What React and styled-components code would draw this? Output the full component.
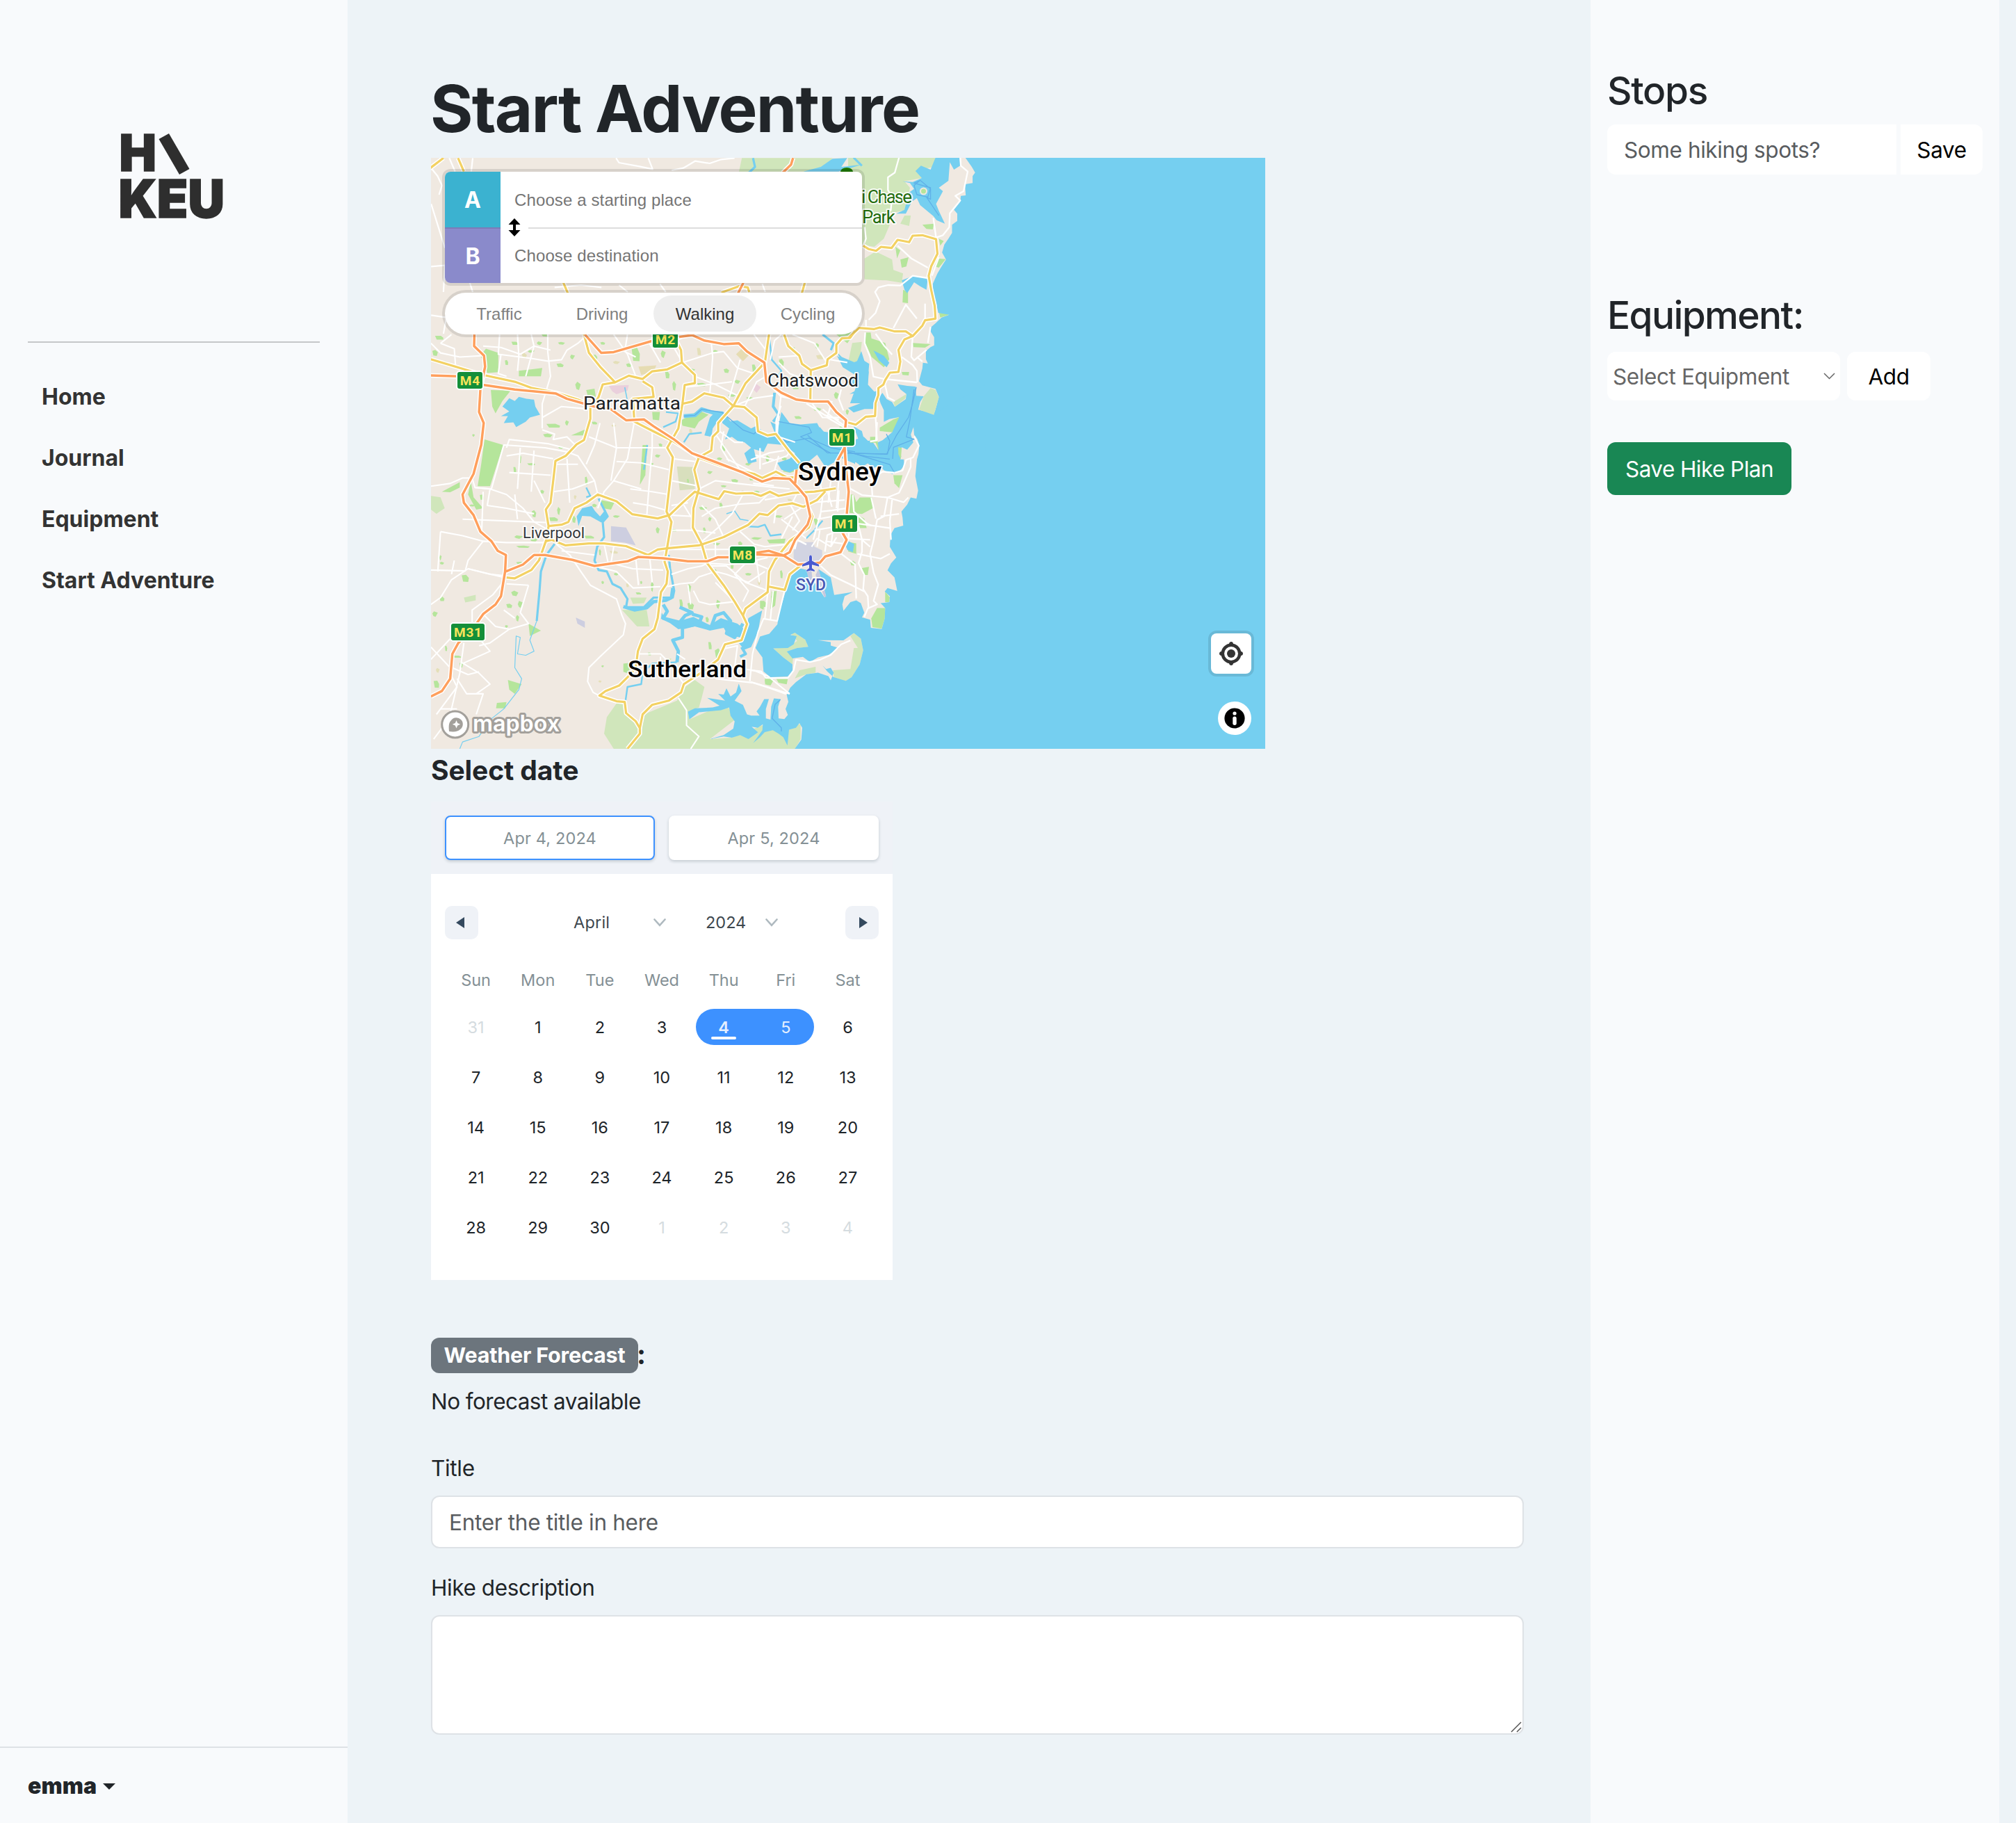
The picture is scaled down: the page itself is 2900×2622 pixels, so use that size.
import React from "react";
import styled, { createGlobalStyle } from "styled-components";

const GlobalStyle = createGlobalStyle`
  *, *::before, *::after { box-sizing: border-box; }
  body { margin: 0; background: #edf3f7; color: #212529; }
  body, input, select, textarea, button { font-family: Inter, "Liberation Sans", sans-serif; }
  h1, h2, h3, p { margin: 0; }
`;

/* ---------- page frame ---------- */
const Page = styled.div`
  display: grid;
  grid-template-columns: 500px 1788px 588px;
  width: 2900px;
  height: 2622px;
  overflow: hidden;
`;

const Sidebar = styled.aside`
  display: flex;
  flex-direction: column;
  background: #f8fafc;
`;
const LogoLink = styled.div`
  height: 491px;
  padding: 160px 0 0 160px;
`;
const Rule = styled.div`
  height: 2px;
  margin: 0 40px 34px;
  background: #c5c7c9;
`;
const Nav = styled.nav`
  display: flex;
  flex-direction: column;
  flex: 1;
`;
const NavItem = styled.a`
  height: 88px;
  line-height: 88px;
  padding-left: 60px;
  font-size: 32px;
  font-weight: 700;
  color: #333;
`;
const Account = styled.div`
  display: flex;
  align-items: center;
  height: 110px;
  padding: 0 0 0 40px;
  border-top: 2px solid #dee2e6;
  font-size: 32px;
  font-weight: 900;
  letter-spacing: 0.1px;
`;
const Caret = styled.span`
  margin: 2px 0 0 9px;
  border: 9px solid transparent;
  border-top-color: #212529;
  border-bottom: 0;
`;

/* ---------- main column ---------- */
const Main = styled.main`
  padding: 99px 96px 0 120px;
`;
const PageTitle = styled.h1`
  height: 115px;
  line-height: 115px;
  margin: 0 0 13px -1px;
  font-size: 94px;
  font-weight: 700;
  letter-spacing: -1.8px;
  white-space: nowrap;
`;
const SectionTitle = styled.h2`
  margin-top: 7px;
  line-height: 48px;
  font-size: 39px;
  font-weight: 700;
  letter-spacing: -0.1px;
`;

/* ---------- map ---------- */
const MapFrame = styled.section`
  position: relative;
  width: 1200px;
  height: 850px;
  overflow: hidden;
  background: #75cff0;
  font-family: "Liberation Sans", Arial, sans-serif;
`;
const MapCanvas = styled.svg`
  display: block;
`;
const Directions = styled.div`
  position: absolute;
  top: 20px;
  left: 20px;
  width: 600px;
`;
const Waypoints = styled.div`
  position: relative;
  border-radius: 8px;
  overflow: hidden;
  background: #fff;
`;
const WaypointShadow = styled.div`
  border-radius: 8px;
  box-shadow: 0 0 0 4px rgba(0, 0, 0, 0.1);
  margin-bottom: 14px;
`;
const Waypoint = styled.div`
  display: flex;
  height: 80px;
  align-items: center;
`;
const WaypointTag = styled.div`
  display: grid;
  place-items: center;
  width: 80px;
  height: 80px;
  background: ${(p) => p.$color};
  border-top: ${(p) => (p.$line ? "2px solid #7c7cb7" : "0")};
  color: #fff;
  font: 700 32px Inter, sans-serif;
`;
const WaypointHint = styled.span`
  padding: 2px 0 0 20px;
  font-size: 24px;
  letter-spacing: 0.12px;
  color: #757575;
`;
const WaypointDivider = styled.div`
  position: absolute;
  left: 120px;
  right: 0;
  top: 80px;
  height: 2px;
  background: #ddd;
`;
const SwapIcon = styled.svg`
  position: absolute;
  left: 91px;
  top: 67px;
`;
const Profiles = styled.div`
  display: flex;
  height: 60px;
  padding: 4px;
  border-radius: 30px;
  background: #fff;
  box-shadow: 0 0 0 4px rgba(0, 0, 0, 0.1);
`;
const Profile = styled.div`
  flex: 1;
  border-radius: 26px;
  line-height: 53px;
  text-align: center;
  font-size: 24px;
  color: ${(p) => (p.$active ? "#333" : "#808080")};
  background: ${(p) => (p.$active ? "#eee" : "transparent")};
`;
const LocateButton = styled.div`
  position: absolute;
  right: 20px;
  top: 684px;
  width: 58px;
  height: 58px;
  border-radius: 8px;
  background: #fff;
  box-shadow: 0 0 0 4px rgba(0, 0, 0, 0.1);
`;
const InfoButton = styled.div`
  position: absolute;
  right: 20px;
  top: 782px;
  width: 48px;
  height: 48px;
  border-radius: 24px;
  background: #fff;
`;
const Label = styled.text`
  font-family: Roboto, sans-serif;
  font-size: ${(p) => p.$size}px;
  font-weight: ${(p) => p.$weight || 400};
  fill: ${(p) => p.$color || "#1c1f24"};
  stroke: rgba(255, 255, 255, 0.85);
  stroke-width: 4px;
  stroke-linejoin: round;
  paint-order: stroke;
`;
const ShieldText = styled.text`
  font-family: Roboto, sans-serif;
  font-size: 19px;
  font-weight: 700;
  letter-spacing: 0.8px;
  fill: #f8e45c;
  text-anchor: middle;
`;
const Wordmark = styled.text`
  font-family: Inter, sans-serif;
  font-size: 32px;
  font-weight: 600;
  fill: #fff;
  stroke: #a3a09b;
  stroke-width: 6px;
  stroke-linejoin: round;
  paint-order: stroke;
`;
const LogoText = styled.text`
  font-family: Inter, sans-serif;
  font-weight: 900;
  fill: #2e2e2e;
  stroke: #2e2e2e;
  stroke-width: 1.5px;
`;

/* Digitising sheets: each converts its own units into map pixels. */
const SHEETS = {
  w: (x, y) => [x / 2.529 - 10, y / 2.529 + 243],
  n: (x, y) => [x / 2.529 + 600, y / 3 - 7],
  e: (x, y) => [x / 3 + 460, y / 2.958 + 333],
  t: (x, y) => [x / 2.376 - 20, y / 3 - 147],
};
const trace = (sheet, text) =>
  text
    .trim()
    .split(/\s+/)
    .map((pair) => {
      const [x, y] = SHEETS[sheet](...pair.split(",").map(Number));
      return `${x.toFixed(1)},${y.toFixed(1)}`;
    })
    .join(" ");

const OCEAN = [
  "1200,-1 1200,850 524,850",
  trace("e", "190,1529 218,1490 222,1440 210,1420 195,1440 165,1448 158,1515 140,1480 120,1465 95,1450 60,1458 40,1480 10,1505 25,1485 50,1450 52,1425 30,1440 0,1435"),
  trace("w", "1188,1452 1215,1475 1180,1500 1150,1485 1120,1495 1090,1490 1040,1500 1090,1485 1125,1462 1130,1435 1115,1415 1110,1385 1080,1395 1000,1402 965,1428 960,1400 985,1388 1050,1385 1075,1378 1030,1350 1095,1360 1070,1335 1090,1338 1100,1315 1115,1345 1135,1330 1145,1298 1155,1325 1130,1360 1160,1375 1175,1410 1188,1414"),
  trace("e", "0,1388 38,1388 25,1370 40,1350 58,1318 78,1318 65,1360 65,1400 85,1405 88,1350 100,1315 128,1318 118,1350 120,1400 145,1403 160,1385 150,1360 162,1330 155,1300 170,1270 195,1245 240,1212 290,1205 335,1220 345,1238 358,1205 345,1185 325,1190 310,1175 330,1200 358,1225 410,1240 435,1225 470,1170 485,1110 475,1060 445,1037 400,1068 290,1067 345,1075 345,1090 380,1100 335,1130 290,1140 255,1160 225,1138 180,1145 155,1115 200,1100 248,1095 235,1065 190,1035 170,1045 198,1050 185,1085 160,1100 97,1102 140,1140 180,1170 180,1200 160,1222 85,1225 55,1200 50,1140 20,1100 40,1052 80,1040 115,1000 120,960 150,860 175,790 205,760 240,768 318,885 325,880 292,765 345,800 360,875 440,862 405,880 395,915 400,942 430,905 455,898 475,910 490,950 480,970 515,980 518,1015 565,1020 578,975 580,930 560,910 598,905 600,880 578,860 590,845 632,858 620,800 590,770 605,740 628,715 600,670 603,620 620,590 658,580 655,545 650,520 675,490 690,460 715,465 722,430 710,370 718,290 728,245 720,225 705,190 698,165 698,190 705,212 685,238 665,240 650,230 637,250 635,275 660,290 662,325 640,350 610,360 575,345 555,322 530,335 505,315 480,330 440,300 440,280 470,262 500,235"),
  trace("n", "110,1285 105,1250 125,1240 135,1230 160,1205 165,1180 185,1140 150,1148 130,1160 130,1110 118,1080 112,1055 125,1035 140,1062 160,1075 170,1095 210,1062 212,1040 190,1020 180,998 215,1005 245,1008 248,1048 275,1050 262,1075 255,1108 290,1118 312,1130 322,1090 330,1052 318,1018 270,1003 258,985 270,930 272,905 290,908 283,890 283,855 300,838 313,830 313,795 300,770 298,755 318,735 340,710 368,698 328,690 320,645 308,600 308,565 325,520 340,490 356,460 342,430 350,395 365,370 378,345 378,310 397,293 397,262 385,245 408,210 410,185 428,183 425,135 453,130 453,100 462,85 450,60 425,18"),
].join(" ");

const WATERS = [
  ["n", "318,20 406,20 408,55 385,72 370,40 365,120 330,150 345,165 320,220 330,250 352,305 322,290 310,272 262,225 250,195 232,210 210,262 175,262 205,245 215,200 222,170 240,155 225,130 198,122 235,125 268,108 245,78 265,55 300,72"],
  ["n", "195,550 235,532 290,540 285,590 262,575 240,558 215,605 205,590"],
  ["n", "92,852 130,875 150,905 140,925 112,895"],
  ["n", "0,920 30,905 48,855 60,900 75,945 72,1000 95,1030 110,1025 112,1060 105,1105 60,1105 20,1120 0,1100 45,1080 60,1060 35,1035 5,1040 50,1010 55,960 30,935 0,935"],
  ["n", "20,1180 50,1200 60,1245 85,1240 112,1285 105,1320 0,1320 0,1270 45,1260"],
  ["n", "110,1285 165,1200 240,1110 320,1120 500,1000 500,1320 252,1320 258,1260 240,1220 235,1185 230,1215 240,1245 215,1280 195,1270 185,1320 100,1320"],
  ["w", "285,290 310,260 330,270 345,255 372,262 400,265 405,290 422,320 385,330 370,345 335,365 325,348 290,350 305,325 280,325 310,308"],
  ["w", "555,690 575,660 610,652 622,670 640,690 660,665 668,695 645,712 605,690 575,688 562,725"],
  ["w", "1085,325 1105,345 1140,340 1190,370 1210,360 1240,388 1280,395 1260,345 1290,360 1300,310 1330,350 1370,355 1430,350 1445,380 1480,385 1500,420 1568,430 1568,500 1530,470 1480,500 1460,510 1430,465 1400,490 1370,510 1330,530 1300,520 1285,495 1330,480 1350,460 1310,430 1250,425 1235,455 1200,445 1210,490 1180,498 1165,460 1190,440 1165,420 1140,415 1120,400 1095,410 1110,370 1085,350"],
  ["w", "1400,385 1440,365 1470,400 1500,390 1540,420 1600,400 1640,440 1640,480 1560,495 1500,470 1450,460"],
  ["w", "1020,395 1040,330 1060,310 1085,320 1050,370 1045,400"],
  ["w", "865,1040 880,1068 930,1070 980,1055 1040,1085 1080,1060 1140,1080 1165,1100 1150,1130 1105,1120 1090,1095 1040,1105 985,1090 925,1100 895,1078 862,1062"],
  ["w", "1170,1100 1180,1060 1230,1032 1222,1070 1215,1110 1190,1165 1165,1175 1145,1150 1165,1130"],
  ["w", "1500,90 1520,110 1568,130 1568,150 1530,145"],
  ["w", "1535,800 1545,780 1565,790 1560,820 1540,812"],
  ["t", "1435,1295 1480,1330 1520,1310 1545,1330 1535,1500 1480,1500 1500,1430 1470,1420 1500,1380 1455,1345"],
  ["t", "1320,500 1380,480 1420,445 1470,442 1450,480 1520,470 1440,500"],
];

const RIVERS = [
  [4, "w", "475,790 445,830 425,890 420,960 410,1070"],
  [1.5, "w", "410,1070 385,1140 400,1180 370,1195 340,1190 350,1130 335,1125 330,1240 355,1280 345,1320 290,1390 240,1430 200,1490 140,1510 130,1535"],
  [4, "w", "635,625 668,690 650,710 655,765 630,800 620,850 635,885 665,890 685,935 715,950 740,990 735,1020 800,1020 835,985 905,985 910,960 895,880 890,830"],
  [6, "w", "725,1018 765,1030 810,1022 835,1000 880,995 900,985 905,950"],
  [6, "w", "870,1010 885,1035 870,1060 930,1075 950,1050 975,1040 930,1020"],
  [6, "w", "975,1045 1010,1055 1000,1080 940,1095 940,1130 905,1140 925,1180 920,1220"],
  [3, "w", "920,1220 830,1225 795,1260 790,1300 740,1310 730,1380"],
  [6, "w", "1045,1090 1060,1050 1090,1040 1115,1070 1100,1115 1130,1130 1160,1080"],
  [5, "w", "1155,1165 1170,1190 1150,1200"],
  [7, "w", "945,325 985,322 1010,300 1050,312 1085,315 1110,350"],
  [3, "w", "870,365 915,345 925,315 880,310"],
  [3, "w", "945,420 965,390 1010,385"],
  [5, "w", "1275,240 1270,290 1290,320 1270,345"],
  [3, "w", "590,585 605,615 590,620"],
  [3, "w", "800,520 808,460 812,430"],
  [2, "w", "740,270 730,220"],
  [3, "w", "1160,725 1215,728 1240,720 1260,760 1300,755"],
  [2, "w", "1100,680 1130,670 1150,700 1180,705"],
  [3, "w", "1450,705 1420,740 1390,770"],
  [3, "w", "1255,28 1265,120 1300,160 1285,185"],
  [4, "w", "1450,28 1490,60 1480,85"],
  [4, "t", "1148,442 1155,480 1130,510"],
  [4, "n", "20,20 50,55"],
];

/* fill, sheet, outline */
const FOREST = "#d0e6bb";
const PARK = "#b5e59b";
const PARKS = [
  [FOREST, "t", "1110,442 1420,442 1400,475 1330,500 1100,500"],
  [FOREST, "n", "0,18 318,18 312,60 262,72 268,108 205,122 225,150 215,205 212,245 150,262 155,300 130,370 95,405 50,395 0,380"],
  [FOREST, "n", "60,455 100,425 160,460 165,505 200,520 195,560 140,550 60,545"],
  [FOREST, "n", "15,820 50,815 40,915 0,905"],
  [PARK, "n", "65,775 82,775 85,800 135,820 150,890 130,925 85,880 78,860 62,820"],
  [PARK, "n", "172,405 190,420 178,455"],
  [PARK, "n", "190,460 220,450 212,490 195,495"],
  [PARK, "n", "270,310 312,305 308,330 285,328"],
  [PARK, "n", "330,370 348,380 335,400"],
  [PARK, "n", "200,590 218,600 218,648 198,645"],
  [PARK, "n", "330,685 368,698 335,710"],
  [PARK, "n", "235,820 300,825 280,840 238,838"],
  [PARK, "n", "325,455 355,458 330,495 315,490"],
  [PARK, "n", "195,945 222,945 220,960 198,958"],
  [FOREST, "n", "205,270 228,270 222,315 190,305"],
  [FOREST, "w", "690,1535 655,1480 665,1420 700,1370 730,1370 735,1405 780,1460 800,1410 920,1360 950,1310 985,1285 1020,1310 1010,1350 1000,1385 960,1400 965,1428 1100,1370 1130,1430 1040,1500 1120,1495 1230,1450 1290,1455 1370,1445 1370,1500 1350,1535"],
  [FOREST, "w", "720,1030 810,1030 820,1090 775,1090"],
  [FOREST, "w", "750,985 810,985 800,1005 760,1008"],
  [FOREST, "e", "97,1102 160,1098 200,1070 170,1035 190,1035 235,1065 248,1095 200,1100 155,1115 182,1145 180,1170 140,1140"],
  [FOREST, "e", "430,1050 445,1037 475,1060 485,1110 470,1170 435,1225 410,1240 360,1235 355,1195 430,1190 445,1100 462,1100"],
  [FOREST, "e", "190,1230 210,1195 280,1180 280,1205 240,1212"],
  [PARK, "e", "520,975 545,930 580,930 578,975 565,1018 525,1012"],
  [PARK, "e", "580,860 600,885 596,905 580,905"],
  [PARK, "e", "425,445 445,450 455,480 470,460 525,460 528,505 480,530 420,525"],
  [PARK, "e", "455,530 490,550 500,590 465,590"],
  [PARK, "e", "615,365 655,365 640,420 620,400"],
  [PARK, "e", "425,650 455,655 455,700 420,690"],
  [PARK, "e", "480,760 510,755 505,790 485,790"],
  [PARK, "e", "270,550 300,550 280,580"],
  [PARK, "e", "90,860 112,858 105,920 85,935"],
  [PARK, "e", "40,900 60,900 55,938 40,930"],
  [PARK, "e", "140,325 190,315 205,345 170,355 140,350"],
  [PARK, "e", "60,1235 100,1235 85,1260 62,1255"],
  [PARK, "e", "110,1232 160,1232 155,1255 120,1248"],
  [PARK, "e", "70,640 150,635 145,655 80,655"],
  [PARK, "w", "220,410 288,430 240,580 195,580 208,500"],
  [PARK, "w", "225,80 270,95 270,165 230,168 222,140 205,105"],
  [PARK, "w", "243,230 315,232 285,270 260,315 248,290"],
  [PARK, "w", "935,340 1000,305 1035,320 1000,345 985,370 940,360"],
  [FOREST, "w", "25,615 60,620 75,660 45,680 25,665"],
  [FOREST, "w", "145,985 188,975 188,995 150,1003"],
  ["#d8dfbd", "w", "920,508 980,510 985,590 930,595"],
  [PARK, "w", "345,160 430,150 425,180 345,180"],
  [PARK, "w", "170,560 180,620 215,660 190,665 160,610"],
  [PARK, "w", "305,1285 355,1300 330,1335 310,1320"],
  [PARK, "w", "265,1368 300,1365 295,1388 262,1388"],
  [PARK, "w", "380,1080 425,1105 385,1125"],
  [PARK, "w", "640,630 692,640 680,665 650,660"],
  [PARK, "w", "795,430 812,430 805,540 785,575"],
  [PARK, "w", "725,1225 750,1222 745,1262 725,1255"],
  [PARK, "w", "535,395 590,372 580,395"],
  [PARK, "w", "830,310 858,310 855,340 832,338"],
  [PARK, "w", "1500,28 1480,20 1568,20 1540,60"],
  [PARK, "w", "65,600 130,565 130,585 95,602"],
  [PARK, "w", "590,230 620,225 625,255 595,250"],
  [PARK, "w", "1240,1275 1265,1280 1262,1300 1242,1300"],
  ["#ead0dc", "w", "672,215 745,212 740,232 700,245 685,235"],
  ["#ead0dc", "w", "1205,205 1225,220 1210,240 1195,225"],
  ["#e6dcb2", "w", "780,145 845,140 835,165 790,175"],
  ["#e6dcb2", "w", "1135,100 1160,75 1185,100 1160,125"],
  ["#cdcee0", "w", "680,725 735,730 770,795 730,785 680,780"],
  ["#cdcee0", "w", "552,1058 585,1072 585,1095 558,1080"],
  ["#d2d4e2", "e", "185,690 200,650 270,650 275,670 308,685 308,720 290,745 215,748 185,720"],
];

/* Shore details drawn over the water */
const HEADLANDS = [
  [FOREST, "n", "275,1050 300,1015 318,1022 330,1055 312,1130 258,1108"],
  [PARK, "n", "115,1185 165,1150 186,1140 160,1205 115,1200"],
  [PARK, "n", "80,1225 105,1225 112,1285 100,1250 80,1250"],
  [FOREST, "n", "165,1075 212,1040 208,1060 170,1095"],
  ["#f0e9e1", "n", "238,1183 240,1215 252,1235 259,1262 256,1300 250,1322 190,1322 198,1290 215,1300 240,1260 228,1215"],
  [PARK, "n", "182,1270 195,1272 192,1322 183,1300"],
  ["#c4c8e0", "e", "240,770 262,770 270,840 258,840"],
  ["#c4c8e0", "e", "292,765 325,880 318,885 280,790"],
];

/* Pocket parks: centre x, centre y, width, height */
const POCKETS = [
  [55, 40, 30, 14], [40, 95, 20, 22], [75, 130, 20, 12], [330, 60, 24, 12], [365, 105, 18, 20], [420, 60, 20, 14],
  [300, 130, 12, 18], [500, 60, 26, 10], [540, 110, 18, 18], [495, 140, 26, 14], [560, 215, 20, 30], [620, 110, 20, 16],
  [650, 60, 18, 10], [700, 130, 26, 12], [770, 100, 30, 50], [745, 140, 20, 14], [870, 100, 18, 28], [885, 175, 16, 26],
  [910, 215, 14, 36], [975, 160, 22, 18], [1010, 210, 34, 12], [1060, 90, 18, 12], [1000, 90, 14, 26], [1100, 160, 20, 16],
  [1140, 200, 22, 14], [1200, 150, 14, 26], [1185, 260, 26, 10], [1150, 240, 14, 16], [1300, 130, 18, 26], [1330, 190, 26, 12],
  [1340, 80, 20, 14], [1440, 110, 28, 16], [1430, 70, 14, 22], [1350, 220, 24, 14], [1430, 300, 30, 12], [1500, 250, 18, 26],
  [470, 360, 50, 14], [450, 395, 34, 14], [520, 350, 14, 20], [620, 350, 20, 10], [690, 360, 18, 8], [500, 440, 24, 8],
  [390, 500, 30, 8], [350, 480, 8, 34], [330, 520, 10, 20], [400, 680, 16, 26], [490, 670, 12, 30], [470, 700, 34, 14],
  [430, 600, 14, 14], [550, 620, 10, 16], [590, 560, 10, 30], [620, 650, 18, 12], [345, 765, 34, 12], [360, 800, 50, 8],
  [400, 775, 30, 12], [600, 765, 36, 10], [545, 700, 14, 26], [700, 690, 26, 10], [690, 820, 30, 10], [640, 820, 8, 24],
  [180, 395, 10, 10], [210, 620, 14, 20], [175, 650, 20, 8], [830, 500, 10, 10], [860, 430, 14, 12], [850, 740, 14, 24],
  [910, 740, 16, 8], [920, 850, 12, 16], [850, 470, 20, 12], [960, 560, 8, 14], [1015, 660, 30, 12], [1040, 700, 12, 16],
  [1080, 650, 12, 20], [1090, 580, 22, 8], [1040, 530, 20, 12], [1130, 560, 26, 12], [1160, 600, 12, 10], [1190, 555, 14, 8],
  [1210, 600, 22, 8], [1065, 790, 26, 10], [1020, 740, 10, 20], [1150, 790, 16, 20], [1210, 770, 40, 10], [1120, 870, 12, 20],
  [1180, 900, 24, 10], [1220, 930, 12, 22], [1060, 890, 10, 18], [965, 950, 14, 30], [935, 1005, 12, 26], [970, 1015, 24, 26],
  [830, 945, 10, 40], [780, 970, 20, 8], [790, 930, 8, 12], [700, 900, 20, 10], [740, 940, 10, 14], [650, 930, 10, 12],
  [1070, 1010, 16, 34], [1030, 1065, 12, 20], [1110, 1090, 24, 14], [1040, 1160, 12, 26], [1070, 1190, 24, 40], [890, 1210, 20, 8],
  [820, 1190, 12, 10], [850, 1240, 30, 10], [40, 1045, 20, 20], [65, 990, 18, 16], [330, 970, 26, 20], [350, 1010, 18, 26],
  [310, 1015, 22, 16], [340, 1060, 12, 24], [120, 1200, 30, 8], [135, 1230, 12, 20], [50, 1250, 14, 18], [45, 1300, 20, 26],
  [35, 1340, 16, 10], [300, 1090, 12, 10], [150, 915, 26, 26], [65, 860, 16, 10], [60, 840, 8, 20], [350, 860, 30, 10],
  [1290, 690, 30, 10], [1330, 630, 16, 8], [1310, 480, 20, 12], [1250, 480, 16, 24], [1150, 370, 24, 10], [1210, 420, 26, 8],
  [1330, 400, 20, 10], [1090, 440, 12, 24], [1075, 480, 20, 10], [1180, 500, 24, 10], [970, 380, 12, 18], [1120, 250, 30, 10],
  [1520, 370, 18, 14], [1560, 860, 20, 18], [1540, 310, 12, 20], [1360, 330, 26, 10], [440, 30, 26, 12], [390, 90, 26, 10],
  [80, 1170, 8, 20], [640, 1290, 12, 8], [650, 1235, 10, 8], [1300, 900, 10, 30], [1270, 985, 16, 24], [1240, 1010, 10, 18],
];

const pocket = ([x, y, w, h], i) => {
  const k = ((i * 37) % 11) / 22;
  const pts = [
    [x - w / 2, y - h * (0.5 - k)], [x - w * (k - 0.2), y - h / 2], [x + w / 2, y - h * k * 0.6],
    [x + w * (0.5 - k), y + h / 2], [x - w * 0.3, y + h * (0.5 - k * 0.4)],
  ];
  return trace("w", pts.map((p) => p.join(",")).join(" "));
};

const STREETS = [
  "25,580 95,570 140,550 175,550 185,585 240,590 300,610 360,660 400,710 445,735", "185,585 245,590 290,430 440,440 520,455 560,470 600,530 620,560 632,610",
  "25,1010 60,985 100,920 160,880 290,912", "25,885 150,888 160,850 215,780 300,785 440,785", "160,880 240,900 285,905",
  "175,1075 175,1030 250,975 290,925", "145,1150 130,1260 100,1390 80,1440 35,1500", "100,1270 120,1310 45,1410", "25,1165 90,1235 160,1265 200,1255",
  "480,790 530,830 570,890 605,940 700,990 720,1050 733,1080 725,1120 640,1200 600,1240 595,1290 615,1330 638,1342",
  "275,28 270,100 390,115 450,125 500,120 520,85 560,60 582,40", "280,100 270,170 300,180", "215,70 280,75 350,100 400,70 460,85", "340,28 345,110 340,160",
  "390,28 400,70 370,180", "450,28 450,90 460,180 430,280 430,370", "60,60 110,80 115,150", "25,60 60,95 130,110 215,105", "100,28 60,60",
  "430,375 475,390 470,410 520,400 550,430", "430,330 500,290 610,300", "300,440 310,410 450,425 530,445", "765,345 740,480 690,560 655,600 632,660",
  "640,350 620,430 590,500", "690,350 700,440 680,560", "600,400 700,440 890,440", "700,490 790,495 890,520", "830,380 830,440 820,560 810,690", "750,590 830,600 890,610",
  "760,640 820,650 890,670", "690,560 790,590", "940,130 900,60 940,40", "690,28 740,100 770,180", "740,28 730,90 770,110", "820,60 860,130",
  "940,130 1050,95 1090,90 1140,150 1200,170", "1045,60 1050,110 1040,240", "985,180 1060,210 1140,250", "945,220 1040,210 1120,200", "1150,120 1110,260",
  "1125,288 1200,260 1270,250", "1165,292 1210,200 1245,180", "1090,380 1080,440 1110,490", "1060,390 1150,520", "1075,380 1130,420 1160,420",
  "905,480 985,490", "900,560 1000,580", "1000,590 1060,560 1140,570 1230,580 1330,590", "1010,690 1060,660 1150,645 1220,640 1260,600", "940,640 970,690 980,700",
  "893,685 980,690", "890,740 980,740 1060,750", "900,650 960,640", "1000,790 1070,730 1120,680 1160,610", "1090,765 1060,700 1010,650", "1060,850 1060,780",
  "890,810 1050,810 1110,810", "1150,745 1200,790 1240,800 1330,790", "1200,860 1250,880", "1030,860 1110,865 1160,860 1250,840", "1040,870 1100,870 1170,930 1250,960",
  "885,945 930,935 980,930 1000,910 1060,890 1100,900 1180,930 1240,890", "900,900 960,880 1010,870 1030,860", "960,940 970,1010", "1170,860 1130,900 1180,960 1160,1000",
  "1060,930 1120,990", "1210,850 1220,930", "1130,1000 1040,1010 1000,1000 980,960", "1240,1060 1250,970", "1312,957 1285,1070 1235,1062 1215,1110 1195,1190 1185,1290",
  "1270,960 1260,1065", "1095,1170 1140,1160 1130,1240 1200,1250 1250,1270 1330,1335", "1060,1280 1200,1295 1330,1335", "945,1300 900,1230 860,1190 780,1190",
  "920,1190 950,1210", "860,1200 860,1250", "925,1350 955,1395 955,1450 1000,1490 970,1535", "620,870 700,890 760,950 860,945", "655,790 670,860", "690,800 680,860 760,880 870,885",
  "770,840 780,940", "820,830 830,930", "500,815 540,820 620,830", "140,700 445,712", "215,600 210,740", "240,590 230,650 300,660 400,680", "330,610 340,700", "400,560 440,640",
  "300,470 360,460 470,480", "310,530 460,540", "350,440 340,590", "400,450 390,600", "480,500 560,500", "470,600 540,590 620,560", "520,480 530,640",
  "25,1210 100,1130", "60,745 50,890", "60,745 140,760 215,780", "110,850 100,900", "220,1050 260,1090 310,1100 380,1080 350,1040 380,940", "200,1160 240,1150 310,1100",
  "290,1030 330,1060", "300,935 380,940", "180,1110 240,1180 140,1225", "135,1220 200,1260 240,1300 190,1335", "120,1280 155,1335 215,1335 190,1410", "60,1390 120,1390",
  "1300,28 1275,50 1260,120", "1200,28 1240,80", "1365,105 1290,110", "1407,200 1330,170 1290,130", "1407,210 1470,205 1510,190", "1405,270 1450,330 1520,330", "1300,240 1290,320 1285,390",
  "1340,28 1420,60 1465,130", "1470,118 1540,130", "1450,300 1500,340 1530,360", "1290,400 1350,420", "1230,500 1320,470 1330,455", "1270,540 1290,470", "1100,480 1200,530",
  "1365,590 1340,640 1290,650", "1300,700 1390,770", "1310,700 1400,640", "1340,690 1300,770", "1440,560 1450,620 1440,700", "1480,560 1470,640", "1510,540 1500,660", "1430,700 1540,680",
  "1420,740 1540,720", "1440,740 1430,800", "1400,640 1530,630", "1490,720 1480,800", "1460,780 1530,790", "1410,800 1430,770 1480,800",
];
const STREETS_EAST = [
  "425,420 480,450 590,460 660,480 680,460", "440,450 445,520 500,570 520,580", "590,460 575,540 545,555 530,640 515,700 530,780 550,830 530,900 545,915 505,932 490,968",
  "620,355 655,345 670,300 700,290 725,240 705,200", "590,460 640,440 655,410 690,330 690,295", "460,560 480,640 515,670", "480,640 480,690 465,740 490,790 485,850 505,880 508,930", "385,695 450,745 455,890",
  "300,750 345,790 430,830 490,860", "420,635 515,640", "450,570 530,580 600,590", "430,550 420,640", "610,470 600,560 605,640", "560,540 640,530", "520,460 540,550", "460,700 560,720 600,700",
  "545,140 540,220", "440,390 480,370 520,380 570,350 620,355", "520,380 525,455",
  "240,660 200,640 190,680", "270,640 300,530", "320,690 330,620 380,600", "345,670 370,630", "0,1195 45,1200 65,1228 160,1228 185,1195 195,1150 255,1160 300,1150 345,1130 390,1085 430,1068",
  "0,1245 80,1270 152,1296", "100,0 130,30 200,45", "130,70 110,130 110,190", "240,60 320,110 380,130", "350,50 330,120 400,160", "390,0 380,40 400,90", "40,250 40,340", "0,300 80,270 145,260",
  "20,280 100,300", "10,400 100,410", "60,470 120,460 180,440", "110,500 100,570", "170,490 210,560 180,600", "300,520 350,515 420,505", "330,430 350,500", "380,430 375,520",
];
const STREETS_NORTH = [
  "408,18 410,55 435,80 420,165 390,185 408,205 370,260 368,320 345,355 320,365", "185,20 170,85 145,105 145,160 160,190 155,250", "75,720 100,690 115,640 98,600 110,580 145,570 190,572 235,530 290,540",
  "65,750 65,720", "62,775 60,820 80,880 92,965 130,975 250,990", "195,880 235,915 250,940 252,990", "130,975 145,1055 170,1070", "100,780 130,830 160,870", "235,790 230,880 240,895 285,850",
  "300,750 290,820", "165,755 210,655 250,715", "280,650 280,720", "180,400 230,455 290,495", "310,280 320,365", "60,320 65,370 55,400", "330,450 305,530", "250,880 270,900",
  "100,1140 105,1240 80,1245",
];
const STREETS_TOP = [
  "110,442 130,500", "190,442 185,500", "680,442 690,462 760,478 805,490 790,442", "870,495 910,485 950,455 1000,465 1040,448 1085,442", "48,485 70,520 85,560 75,600", "48,640 95,830", "48,910 95,905 90,1020",
  "470,1000 560,990 630,1000", "180,980 190,1020", "690,990 720,1020", "830,985 850,1020", "1180,985 1190,1020", "48,1120 100,1130 90,1200",
];

const ARTERIALS = [
  ["w", "25,118 215,175 330,200 390,222 480,240 560,265 615,290"],
  ["w", "582,28 600,95 640,145 695,202 745,178 795,190 830,162 885,155 938,130 935,85 920,55"],
  ["w", "605,290 605,335 582,412 555,428 515,470 478,488 470,560 460,640 443,665 453,725 443,780 418,850 390,885 330,915 300,912"],
  ["w", "615,290 635,255 650,210 695,202"],
  ["w", "453,725 500,720 525,710 548,660 590,640 632,610 700,635 758,682 850,697 893,685 940,640 985,600 1072,627 1092,598 1135,607 1195,605 1225,615 1258,600 1290,615 1340,605 1420,600 1498,588"],
  ["w", "443,780 465,775 515,795 600,788 655,788 735,798 815,830 850,810 890,805 1000,795 1090,765 1180,720 1220,680 1250,685 1290,650 1340,642 1380,655 1430,630 1460,598"],
  ["w", "795,198 830,220 835,255 760,262 765,345 830,378 910,418 1000,476 1080,505 1160,526 1200,535 1230,550 1280,527 1320,548 1365,548"],
  ["w", "938,130 985,175 985,205 948,212 940,280 925,370 885,440 905,475 895,560 882,672 900,710 885,800 875,855 887,890 882,935 862,965 850,1060 838,1100 795,1135 778,1180 770,1240 740,1275 710,1305 660,1325 638,1342 700,1362 730,1365 735,1405 770,1435 785,1460 785,1480 740,1535"],
  ["w", "940,280 975,272 1020,242 1090,258 1125,288 1165,292 1210,330 1215,380 1250,395 1280,390 1330,455 1365,495"],
  ["w", "1255,28 1240,130 1170,205 1125,288 1070,350 1070,380 1050,400 1045,450 1000,475 983,520 1000,590 980,660 978,730 1010,790 1030,860 1090,940 1130,1000 1160,1050 1175,1082 1155,1140 1095,1155 1070,1210 1020,1250 945,1300 935,1330 890,1360 830,1375 795,1410 785,1460"],
  ["w", "1160,1050 1170,1025 1250,965 1255,890 1275,850 1330,780 1400,730 1413,690 1400,660"],
  ["w", "1255,945 1312,957 1330,900 1370,868"],
  ["w", "1310,28 1325,70 1365,105 1375,135 1407,158 1405,270"],
  ["w", "1407,158 1465,140 1468,118 1500,95 1500,65 1520,42 1550,40 1568,15"],
  ["n", "0,800 40,755 95,760 115,753 170,770 210,770 235,790 270,745 280,722 318,715 315,660 302,590 293,530 302,490 325,435 320,372 270,355 235,357 222,385 180,375 158,410 120,405 102,422 75,415 55,400"],
  ["n", "235,790 205,805 183,850 190,900 183,945 152,948 135,980 128,1000 110,1015 110,1045 100,1080 98,1135 65,1138 28,1172 0,1163"],
  ["t", "40,490 90,442"],
  ["t", "140,442 160,500"],
  ["t", "500,980 515,1025"],
  ["t", "1135,1020 1130,1000 1100,995 1040,1022"],
  ["t", "1325,980 1315,1025"],
];
const MOTORWAYS = [
  ["w", "183,28 182,70 218,105 222,145 205,225 200,310 217,350 208,430 180,535 140,610 145,640 180,685 205,745 245,780 268,815 298,830 295,890 280,980 260,1010 215,1045 180,1095 125,1150 103,1190 95,1280 65,1325 25,1345"],
  ["w", "25,177 125,180 218,212 330,228 480,243 520,262 620,290 680,300 735,340 800,337 835,362 910,410 975,460 1060,492 1160,530 1230,563 1270,550 1330,553 1365,590 1390,620 1405,690 1395,720 1350,775 1330,820 1308,832"],
  ["w", "585,28 645,95 690,92 835,50 975,30 1020,50 1090,63 1145,60 1175,90 1238,130 1245,200 1300,240 1355,265 1410,272 1470,272 1500,310 1535,340 1530,390 1530,440 1535,520 1545,600 1538,680"],
  ["w", "298,890 360,865 400,830 440,830 540,848 620,870 740,853 780,837 870,842 960,853 1030,853 1070,838 1115,838"],
  ["w", "1208,822 1255,815 1308,832 1360,865 1440,858 1460,835 1515,820 1537,775 1520,745"],
  ["w", "1208,828 1308,832"],
  ["w", "1500,495 1530,440"],
  ["w", "1350,570 1355,520"],
  ["t", "1285,442 1278,470 1250,505"],
  ["t", "1115,980 1095,1030"],
];
const FERRIES = [
  ["n", "248,1010 235,1080 220,1140 175,1220 140,1300 0,1295"],
  ["n", "240,1020 225,1150 212,1225 240,1235 165,1270 162,1320"],
  ["n", "262,118 240,130 300,150 290,190 250,180 240,140 262,118 300,155 300,200 285,190 330,270"],
  ["w", "945,325 985,322 1010,300 1085,312 1160,375 1200,390 1215,375 1250,400 1290,395 1320,420 1400,405 1480,440 1568,455"],
  ["w", "1290,345 1400,365 1410,385 1370,400 1480,460"],
  ["e", "245,195 330,270 590,275 600,220 585,190"],
  ["e", "420,265 600,320 620,355"],
  ["e", "420,268 500,285 600,297"],
  ["e", "128,1320 105,1340 92,1400 132,1440 132,1455"],
];
const SHIELDS = [
  ["M4", 38, 308, 36], ["M2", 319, 249, 36], ["M31", 29, 670, 48], ["M8", 430, 559, 36], ["M1", 573, 390, 36], ["M1", 577, 514, 36],
];

const Lines = ({ items, color, width, casing }) => (
  <g fill="none" strokeLinejoin="round" strokeLinecap="butt">
    {casing && items.map(([s, p], i) => <polyline key={`c${i}`} points={trace(s, p)} stroke="#fff" strokeWidth={casing} />)}
    {items.map(([s, p], i) => <polyline key={i} points={trace(s, p)} stroke={color} strokeWidth={width} />)}
  </g>
);

const tag = (sheet, list) => list.map((p) => [sheet, p]);

function CityMap() {
  return (
    <MapCanvas width="1200" height="850" viewBox="0 0 1200 850">
      <rect width="1200" height="850" fill="#f0e9e1" />
      {PARKS.map(([fill, s, p], i) => <polygon key={i} points={trace(s, p)} fill={fill} />)}
      {POCKETS.map((p, i) => <polygon key={i} points={pocket(p, i)} fill={i % 9 === 4 ? "#e4dfb8" : PARK} />)}
      <polygon points={OCEAN} fill="#75cff0" />
      {WATERS.map(([s, p], i) => <polygon key={i} points={trace(s, p)} fill="#75cff0" />)}
      {RIVERS.map(([w, s, p], i) => (
        <polyline key={i} points={trace(s, p)} fill="none" stroke="#75cff0" strokeWidth={w * 0.8} strokeLinejoin="round" />
      ))}
      {HEADLANDS.map(([fill, s, p], i) => <polygon key={i} points={trace(s, p)} fill={fill} />)}
      <circle cx="708.500" cy="48" r="4.500" fill={PARK} stroke="#f0e9e1" strokeWidth="2" />
      <Lines items={FERRIES} color="#5fb0e8" width={1.3} />
      <Lines items={tag("w", STREETS)} color="#fff" width={2.1} />
      <Lines items={tag("e", STREETS_EAST)} color="#fff" width={2.3} />
      <Lines items={tag("n", STREETS_NORTH)} color="#fff" width={2.3} />
      <Lines items={tag("t", STREETS_TOP)} color="#fff" width={2.2} />
      <Lines items={ARTERIALS} color="#f3d163" width={3.2} casing={6.4} />
      <Lines items={MOTORWAYS} color="#ff9f5c" width={3.5} casing={6.6} />

      {SHIELDS.map(([name, x, y, w], i) => (
        <g key={i}>
          <rect x={x - 1} y={y - 1} width={w + 2} height="26" rx="4" fill="#148f39" stroke="#fff" strokeWidth="2" />
          <ShieldText x={x + w / 2 + 0.4} y={y + 18.8}>{name}</ShieldText>
        </g>
      ))}
      <path d="M589 20a9 6 0 0 1 18 0v4h-18z" fill="#1f7a00" />
      <Label x="619" y="65" $size={26} $color="#226b0d" textLength="73">i Chase</Label>
      <Label x="620" y="94" $size={26} $color="#226b0d" textLength="48">Park</Label>
      <Label x="484" y="328.5" $size={26} textLength="131" lengthAdjust="spacingAndGlyphs">Chatswood</Label>
      <Label x="219" y="361.5" $size={26} textLength="140" lengthAdjust="spacingAndGlyphs">Parramatta</Label>
      <Label x="132" y="546.5" $size={21.5} $color="#33363b" textLength="89" lengthAdjust="spacingAndGlyphs">Liverpool</Label>
      <Label x="528" y="463.5" $size={36} $weight={500} $color="#000" textLength="120" lengthAdjust="spacingAndGlyphs">Sydney</Label>
      <Label x="283" y="746.5" $size={34} $weight={500} $color="#000" textLength="171" lengthAdjust="spacingAndGlyphs">Sutherland</Label>
      <path
        d="M546 571.5c1.6 0 2 2 2 3.500v4.500l10 5.500v2.800l-10-2.600v5l3.800 2.700v2.100l-5.800-1.400-5.800 1.400v-2.100l3.800-2.700v-5l-10 2.600V585l10-5.500V575c0-1.500.4-3.500 2-3.500z"
        fill="#4a5bd0" stroke="#fff" strokeWidth="1" paintOrder="stroke"
      />
      <Label x="525" y="621.5" $size={23} $weight={500} $color="#4757b4" textLength="43">SYD</Label>

      <circle cx="34.700" cy="815" r="19" fill="#fff" stroke="#a3a09b" strokeWidth="3" />
      <path d="M26 825c-1-9 0-13 3-16a9.300 9.300 0 1 1 13 13c-3 3-8 4-16 3z" fill="#a3a09b" />
      <path d="M36.500 809l1.700 4 4 1.700-4 1.700-1.700 4-1.700-4-4-1.700 4-1.700z" fill="#fff" />
      <Wordmark x="60" y="825" textLength="125" lengthAdjust="spacingAndGlyphs">mapbox</Wordmark>
    </MapCanvas>
  );
}

function MapPanel() {
  return (
    <MapFrame>
      <CityMap />
      <Directions>
        <WaypointShadow>
          <Waypoints>
            <Waypoint>
              <WaypointTag $color="#3bb2d0">A</WaypointTag>
              <WaypointHint>Choose a starting place</WaypointHint>
            </Waypoint>
            <Waypoint>
              <WaypointTag $color="#8a8acb" $line>B</WaypointTag>
              <WaypointHint>Choose destination</WaypointHint>
            </Waypoint>
            <WaypointDivider />
            <SwapIcon width="18" height="26" viewBox="0 0 18 26">
              <path d="M9 0l8.500 9H11v8h6.500L9 26 .5 17H7V9H.5z" fill="#000" />
            </SwapIcon>
          </Waypoints>
        </WaypointShadow>
        <Profiles>
          {["Traffic", "Driving", "Walking", "Cycling"].map((name) => (
            <Profile key={name} $active={name === "Walking"}>{name}</Profile>
          ))}
        </Profiles>
      </Directions>
      <LocateButton>
        <svg width="58" height="58" viewBox="0 0 58 58">
          <circle cx="29" cy="29" r="12.200" fill="none" stroke="#333" strokeWidth="4.500" />
          <circle cx="29" cy="29" r="6" fill="#333" />
          <g fill="#333">
            <path d="M24.500 16l1.500-1c.3-4 6-4 6 0l1.500 1z" />
            <path d="M24.500 42l1.500 1c.3 4 6 4 6 0l1.500-1z" />
            <path d="M16 24.500l-1 1.500c-4 .3-4 6 0 6l1 1.500z" />
            <path d="M42 24.500l1 1.500c4 .3 4 6 0 6l-1 1.500z" />
          </g>
        </svg>
      </LocateButton>
      <InfoButton>
        <svg width="48" height="48" viewBox="0 0 48 48">
          <circle cx="24" cy="24" r="14.600" fill="#000" />
          <circle cx="24" cy="17" r="2.600" fill="#fff" />
          <rect x="21.300" y="21.500" width="5.400" height="12.500" rx="2.700" fill="#fff" />
        </svg>
      </InfoButton>
    </MapFrame>
  );
}

/* ---------- date range picker ---------- */
const Picker = styled.div`
  width: 664px;
  margin-top: 21px;
  color: #1d2429;
`;
const RangeBar = styled.div`
  display: grid;
  grid-template-columns: 1fr 1fr;
  gap: 20px;
  padding: 20px;
  background: #eff2f7;
`;
const RangeField = styled.div`
  height: 64px;
  border: 2px solid ${(p) => (p.$active ? "#3d91ff" : "#fff")};
  border-radius: 8px;
  background: #fff;
  box-shadow: 0 2px 4px rgba(35, 57, 66, 0.21);
  line-height: 62px;
  text-align: center;
  color: #849095;
  font-size: 23.5px;
  letter-spacing: 0.15px;
`;
const Month = styled.div`
  display: flex;
  flex-direction: column;
  padding: 46px 20px 50px;
  background: #fff;
`;
const MonthNav = styled.div`
  display: flex;
  justify-content: space-between;
  height: 48px;
  margin-bottom: 32px;
`;
const NavButton = styled.div`
  display: grid;
  place-items: center;
  width: 48px;
  height: 48px;
  border-radius: 10px;
  background: #eff2f7;
`;
const MonthSelects = styled.div`
  display: flex;
  align-items: center;
  width: 294px;
  margin: 0 auto 0 137px;
  line-height: 50px;
  font-size: 23.5px;
  color: #3e484f;
`;
const MonthName = styled.span`
  width: 115px;
  letter-spacing: 0.2px;
`;
const YearName = styled.span`
  width: 86px;
  margin-left: 57px;
`;
const Grid = styled.div`
  display: grid;
  grid-template-columns: repeat(7, 1fr);
  row-gap: 20px;
`;
const Weekdays = styled(Grid)`
  height: 52px;
  margin-bottom: 16px;
  line-height: 54px;
  text-align: center;
  color: #849095;
  font-size: 23.5px;
`;
const Day = styled.div`
  position: relative;
  height: 52px;
  margin: ${(p) => (p.$edge === "start" ? "0 0 0 4px" : p.$edge === "end" ? "0 4px 0 0" : "0")};
  padding: ${(p) => (p.$edge === "start" ? "0 4px 0 0" : p.$edge === "end" ? "0 0 0 4px" : "0")};
  border-radius: ${(p) => (p.$edge === "start" ? "26px 0 0 26px" : p.$edge === "end" ? "0 26px 26px 0" : "0")};
  background: ${(p) => (p.$edge ? "#3d91ff" : "transparent")};
  color: ${(p) => (p.$edge ? "#e3efff" : p.$muted ? "#d5dce0" : "inherit")};
  font-size: 23.5px;
  font-weight: ${(p) => (p.$edge === "start" ? 600 : 400)};
  line-height: 54px;
  text-align: center;
`;
const TodayMark = styled.span`
  position: absolute;
  left: 22px;
  bottom: 8px;
  width: 36px;
  height: 4px;
  border-radius: 2px;
  background: #fff;
`;

const Chevron = () => (
  <svg width="18" height="12" viewBox="0 0 18 12">
    <path d="M1.500 1.500L9 9.800l7.500-8.300" fill="none" stroke="#aeb9bf" strokeWidth="2.600" strokeLinecap="round" />
  </svg>
);

const WEEKDAYS = ["Sun", "Mon", "Tue", "Wed", "Thu", "Fri", "Sat"];
const DAYS = Array.from({ length: 35 }, (_, i) => {
  const n = i === 0 ? 31 : i > 30 ? i - 30 : i;
  return { n, muted: i === 0 || i > 30, edge: i === 4 ? "start" : i === 5 ? "end" : undefined };
});

function DatePicker() {
  return (
    <Picker>
      <RangeBar>
        <RangeField $active>Apr 4, 2024</RangeField>
        <RangeField>Apr 5, 2024</RangeField>
      </RangeBar>
      <Month>
        <MonthNav>
          <NavButton>
            <svg width="16" height="16" viewBox="0 0 16 16"><path d="M12 0v16L0 8z" fill="#34495e" /></svg>
          </NavButton>
          <MonthSelects>
            <MonthName>April</MonthName>
            <Chevron />
            <YearName>2024</YearName>
            <Chevron />
          </MonthSelects>
          <NavButton>
            <svg width="16" height="16" viewBox="0 0 16 16"><path d="M4 0v16l12-8z" fill="#34495e" /></svg>
          </NavButton>
        </MonthNav>
        <Weekdays>{WEEKDAYS.map((d) => <span key={d}>{d}</span>)}</Weekdays>
        <Grid>
          {DAYS.map((d, i) => (
            <Day key={i} $muted={d.muted} $edge={d.edge}>
              {d.n}
              {i === 4 && <TodayMark />}
            </Day>
          ))}
        </Grid>
      </Month>
    </Picker>
  );
}

/* ---------- forecast and form ---------- */
const Forecast = styled.div`
  display: flex;
  height: 51px;
  margin-top: 83px;
  font-size: 39px;
  font-weight: 700;
  line-height: 47px;
`;
const Badge = styled.span`
  width: 298px;
  margin-right: -2px;
  border-radius: 12px;
  background: #6c757d;
  color: #fff;
  text-align: center;
  font-size: 30.5px;
  line-height: 50px;
  letter-spacing: -0.2px;
`;
const Line = styled.div`
  height: 48px;
  line-height: 48px;
  margin-top: ${(p) => p.$top}px;
  font-size: 31.5px;
  letter-spacing: ${(p) => p.$track || "-0.4px"};
`;
const TitleInput = styled.input`
  display: block;
  width: 1572px;
  height: 76px;
  margin-top: 15px;
  padding: 0 24px;
  border: 2px solid #dee2e6;
  border-radius: 12px;
  background: #fff;
  font-size: 31.5px;
  letter-spacing: -0.3px;
  outline: 0;
  &::placeholder { color: #595c5f; opacity: 1; }
`;
const DescriptionWrap = styled.div`
  position: relative;
  width: 1572px;
  margin-top: 15px;
`;
const Description = styled.textarea`
  display: block;
  width: 100%;
  height: 172px;
  border: 2px solid #dee2e6;
  border-radius: 12px;
  background: #fff;
  resize: none;
`;
const Grip = styled.svg`
  position: absolute;
  right: 3px;
  bottom: 3px;
`;

/* ---------- planning panel ---------- */
const Planner = styled.aside`
  display: flex;
  flex-direction: column;
  align-items: flex-start;
  padding: 96px 24px 0;
  background: #f8fafc;
`;
const PlannerTitle = styled.h2`
  height: 68px;
  line-height: 68px;
  margin: ${(p) => p.$top || 0}px 0 ${(p) => p.$bottom}px;
  font-size: 55px;
  font-weight: 500;
  letter-spacing: ${(p) => p.$track};
`;
const Row = styled.div`
  display: flex;
  gap: ${(p) => p.$gap}px;
`;
const StopInput = styled.input`
  width: 416px;
  height: 72px;
  padding: 0 24px;
  border: 0;
  border-radius: 12px 0 0 12px;
  background: #fff;
  font-size: 31.5px;
  letter-spacing: -0.4px;
  &::placeholder { color: #595c5f; opacity: 1; }
`;
const LightButton = styled.button`
  width: ${(p) => p.$width}px;
  height: ${(p) => p.$height}px;
  padding: 0;
  border: 0;
  border-radius: ${(p) => (p.$joined ? "0 12px 12px 0" : "12px")};
  background: #fff;
  color: #000;
  font-size: 31.5px;
  letter-spacing: -0.4px;
`;
const SelectBox = styled.div`
  display: flex;
  align-items: center;
  justify-content: space-between;
  width: 335px;
  height: 70px;
  padding: 0 7px 0 8px;
  border-radius: 12px;
  background: #fff;
  color: #666;
  font-size: 31.5px;
  letter-spacing: -0.4px;
`;
const SaveButton = styled.button`
  width: 265px;
  height: 76px;
  margin-top: 60px;
  padding: 0;
  border: 0;
  border-radius: 12px;
  background: #198754;
  color: #fff;
  font-size: 31.5px;
  letter-spacing: -0.55px;
`;

export default function App() {
  return (
    <>
      <GlobalStyle />
      <Page>
        <Sidebar>
          <LogoLink>
            <svg width="180" height="180" viewBox="160 160 180 180">
              <LogoText x="171.500" y="246" fontSize="73.500" textLength="53.500" lengthAdjust="spacingAndGlyphs">H</LogoText>
              <polygon points="228.500,200 243,192 272.500,243 258,251" fill="#2e2e2e" />
              <LogoText x="170.500" y="312.500" fontSize="75.500" textLength="152.500" lengthAdjust="spacingAndGlyphs">KEU</LogoText>
            </svg>
          </LogoLink>
          <Rule />
          <Nav>
            <NavItem>Home</NavItem>
            <NavItem>Journal</NavItem>
            <NavItem>Equipment</NavItem>
            <NavItem>Start Adventure</NavItem>
          </Nav>
          <Account>
            emma
            <Caret />
          </Account>
        </Sidebar>

        <Main>
          <PageTitle>Start Adventure</PageTitle>
          <MapPanel />
          <SectionTitle>Select date</SectionTitle>
          <DatePicker />
          <Forecast>
            <Badge>Weather Forecast</Badge>:
          </Forecast>
          <Line $top={17} $track="-0.55px">No forecast available</Line>
          <Line $top={48} $track="-0.3px">Title</Line>
          <TitleInput placeholder="Enter the title in here" />
          <Line $top={33}>Hike description</Line>
          <DescriptionWrap>
            <Description />
            <Grip width="16" height="16" viewBox="0 0 16 16">
              <path d="M1 15L15 1M9 15l6-6" stroke="#555" strokeWidth="1.500" />
            </Grip>
          </DescriptionWrap>
        </Main>

        <Planner>
          <PlannerTitle $bottom={15} $track="-1.3px">Stops</PlannerTitle>
          <Row $gap={6}>
            <StopInput placeholder="Some hiking spots?" />
            <LightButton $width={118} $height={72} $joined>Save</LightButton>
          </Row>
          <PlannerTitle $top={168} $bottom={19} $track="-1.6px">Equipment:</PlannerTitle>
          <Row $gap={10}>
            <SelectBox>
              Select Equipment
              <svg width="17" height="10" viewBox="0 0 17 10">
                <path d="M1 1l7.500 7.500L16 1" fill="none" stroke="#666" strokeWidth="1.500" />
              </svg>
            </SelectBox>
            <LightButton $width={120} $height={70}>Add</LightButton>
          </Row>
          <SaveButton>Save Hike Plan</SaveButton>
        </Planner>
      </Page>
    </>
  );
}
